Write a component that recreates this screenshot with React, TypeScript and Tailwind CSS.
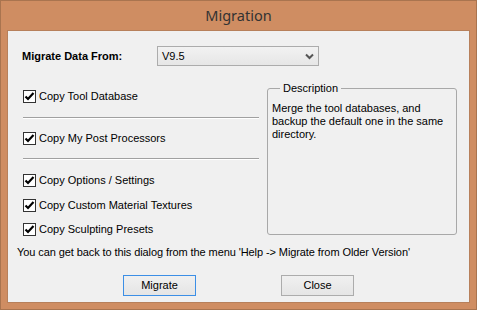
import React from "react";

const sans = { fontFamily: '"Liberation Sans", Arial, sans-serif' };

function Check({ label }: { label: string }) {
  return (
    <div className="flex items-center h-5">
      <div className="w-[13px] h-[13px] border border-[#333333] bg-white flex items-center justify-center">
        <svg width="11" height="11" viewBox="0 0 11 11">
          <path d="M1.5 5.5 L4 8 L9.5 2" fill="none" stroke="#000" strokeWidth="2.2" />
        </svg>
      </div>
      <span className="ml-[3px] text-[11px] text-black">{label}</span>
    </div>
  );
}

function Sep() {
  return <div className="h-[2px] border-t border-[#a0a0a0] border-b border-b-white" />;
}

function Btn({ label, focused }: { label: string; focused?: boolean }) {
  return (
    <button
      className={
        "w-[73px] h-[21px] text-[11px] text-black bg-gradient-to-b from-[#f0f0f0] to-[#e5e5e5] border " +
        (focused ? "border-[#3c8fe6]" : "border-[#acacac]")
      }
    >
      {label}
    </button>
  );
}

export default function App() {
  return (
    <div
      className="w-[477px] h-[310px] bg-[#cf8d62] border border-[#a9744f] flex flex-col"
      style={sans}
    >
      <div
        className="h-[29px] flex items-center justify-center text-[14.5px] text-[#333333]"
        style={{ fontFamily: '"Noto Sans", "Open Sans", sans-serif' }}
      >
        Migration
      </div>
      <div className="mx-[6px] h-[273px] border border-[#b7805b] bg-[#f0f0f0] flex flex-col">
        {/* source version */}
        <div className="flex items-center mt-[15px] h-5">
          <span className="ml-[14px] w-[135px] text-[11px] font-bold text-black">Migrate Data From:</span>
          <div className="w-[162px] h-5 border border-[#acacac] bg-gradient-to-b from-[#f2f2f2] to-[#e6e6e6] flex items-center justify-between px-[4px]">
            <span className="text-[11px] text-black">V9.5</span>
            <svg width="9" height="7" viewBox="0 0 9 7">
              <path d="M1 1.5 L4.5 5 L8 1.5" fill="none" stroke="#555" strokeWidth="2" />
            </svg>
          </div>
        </div>

        {/* body */}
        <div className="flex mt-[20px]">
          <div className="ml-[15px] w-[236px] flex flex-col">
            <Check label="Copy Tool Database" />
            <div className="mt-[11px]">
              <Sep />
            </div>
            <div className="mt-[9px]">
              <Check label="Copy My Post Processors" />
            </div>
            <div className="mt-[10px]">
              <Sep />
            </div>
            <div className="mt-[10px]">
              <Check label="Copy Options / Settings" />
            </div>
            <div className="mt-[5px]">
              <Check label="Copy Custom Material Textures" />
            </div>
            <div className="mt-[4px]">
              <Check label="Copy Sculpting Presets" />
            </div>
          </div>
          <fieldset className="ml-[8px] -mt-[4px] w-[190px] h-[153px] border border-[#a8a8a8] rounded-[3px] px-[4px] pt-[7px]">
            <legend className="ml-[8px] px-[3px] text-[11px] leading-[13px] text-black">Description</legend>
            <p className="text-[11px] leading-[13px] text-black">
              Merge the tool databases, and backup the default one in the same directory.
            </p>
          </fieldset>
        </div>

        <div className="ml-[9px] mt-[7px] text-[11px] leading-[13px] tracking-[-0.09px] text-black">
          You can get back to this dialog from the menu 'Help -&gt; Migrate from Older Version'
        </div>

        <div className="flex mt-[13px]">
          <div className="ml-[115px]">
            <Btn label="Migrate" focused />
          </div>
          <div className="ml-[85px]">
            <Btn label="Close" />
          </div>
        </div>
      </div>
    </div>
  );
}
